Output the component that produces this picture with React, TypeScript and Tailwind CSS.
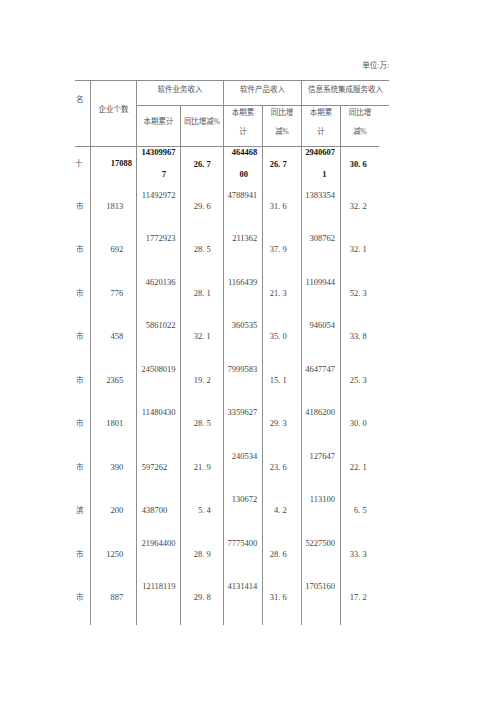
import React from 'react';

// scanned table page: software revenue by city
const line = 'border-[#8c8c8c]';

const rows: string[][] = [
  ['市', '1813', '11492972', '29.6', '4788941', '31.6', '1383354', '32.2'],
  ['市', '692', '1772923', '28.5', '211362', '37.9', '308762', '32.1'],
  ['市', '776', '4620136', '28.1', '1166439', '21.3', '1109944', '52.3'],
  ['市', '458', '5861022', '32.1', '360535', '35.0', '946054', '33.8'],
  ['市', '2365', '24508019', '19.2', '7999583', '15.1', '4647747', '25.3'],
  ['市', '1801', '11480430', '28.5', '3359627', '29.3', '4186200', '30.0'],
  ['市', '390', '<597262', '21.9', '240534', '23.6', '127647', '22.1'],
  ['滨', '200', '<438700', '5.4', '130672', '4.2', '113100', '6.5'],
  ['市', '1250', '21964400', '28.9', '7775400', '28.6', '5227500', '33.3'],
  ['市', '887', '12118119', '29.8', '4131414', '31.6', '1705160', '17.2'],
];

// '.' takes a full digit width, as in the scanned font
function Num({ v }: { v: string }) {
  return (
    <>
      {v.split('').map((ch, i) =>
        ch === '.' ? (
          <span key={i} className="inline-block w-[0.5em] text-left">.</span>
        ) : (
          <span key={i}>{ch}</span>
        )
      )}
    </>
  );
}

const colCls = [
  'whitespace-nowrap pl-[1px] pt-[11px]',
  `border-l ${line} text-right pr-[12.7px] pt-[11px]`,
  `border-l ${line} text-right pr-[4.5px]`,
  `border-l ${line} text-right pr-[12.3px] pt-[11px]`,
  `border-l ${line} text-right pr-[4.7px]`,
  `border-l ${line} text-right pr-[14.3px] pt-[11px]`,
  `border-l ${line} text-right pr-[5px]`,
  `border-l ${line} text-right pr-[12.3px] pt-[11px]`,
];

const App: React.FC = () => {
  return (
    <div className="w-[500px] h-[707px] bg-white pt-[60px] font-['Liberation_Serif','Noto_Sans_CJK_SC',serif] text-[#444]">
      <div className="ml-[75px] w-[314px] h-[11px] text-right text-[7.5px] leading-[11px] text-[#555]">
        单位:万:
      </div>

      <div className="mt-[9px] ml-[75px] grid grid-cols-[15px_46px_44px_43px_39px_39px_39px_39px_10px] grid-rows-[26px_40px_repeat(11,43.5px)] text-[8.5px] leading-[11px]">
        {/* header row 1 */}
        <div className={`row-span-2 border-t ${line} pl-[1px] pt-[12.8px] text-[7.5px] text-[#555]`}>名</div>
        <div className={`row-span-2 border-t border-l ${line} text-center pt-[22.8px] text-[7.5px] text-[#555]`}>企业个数</div>
        <div className={`col-span-2 border-t border-b border-l ${line} text-center pt-[2.5px] text-[7.5px] text-[#555]`}>软件业务收入</div>
        <div className={`col-span-2 border-t border-b border-l ${line} text-center pt-[2.5px] text-[7.5px] text-[#555]`}>软件产品收入</div>
        <div className={`col-span-3 border-t border-b border-l ${line} text-center pt-[2.5px] text-[7.5px] text-[#555]`}>信息系统集成服务收入</div>

        {/* header row 2 */}
        <div className={`border-l ${line} text-center pt-[9.5px] text-[7.5px] text-[#555]`}>本期累计</div>
        <div className={`border-l ${line} text-center pt-[9.5px] text-[7.5px] text-[#555]`}>同比增减%</div>
        {['本期累|计', '同比增|减%', '本期累|计', '同比增|减%'].map((h, i) => (
          <div key={i} className={`border-l ${line} text-center pt-[0.5px] text-[7.5px] text-[#555]`}>
            <div>{h.split('|')[0]}</div>
            <div className="mt-[8px]">{h.split('|')[1]}</div>
          </div>
        ))}
        <div />

        {/* total row */}
        <div className={`border-t ${line} whitespace-nowrap pt-[11px] text-[7.5px] text-[#555]`}>十</div>
        <div className={`border-t border-l ${line} text-right pr-[4px] pt-[11px] font-bold text-[#111]`}>17088</div>
        <div className={`border-t border-l ${line} text-right pr-[4.5px] font-bold text-[#111]`}>
          <div>14309967</div>
          <div className="mt-[10.8px] pr-[9.5px]">7</div>
        </div>
        <div className={`border-t border-l ${line} text-right pr-[12.3px] pt-[12px] font-bold text-[#111]`}>
          <Num v="26.7" />
        </div>
        <div className={`border-t border-l ${line} text-right pr-[4.7px] font-bold text-[#111]`}>
          <div>464468</div>
          <div className="mt-[10.8px] pr-[9.3px]">00</div>
        </div>
        <div className={`border-t border-l ${line} text-right pr-[14.3px] pt-[12px] font-bold text-[#111]`}>
          <Num v="26.7" />
        </div>
        <div className={`border-t border-l ${line} text-right pr-[5px] font-bold text-[#111]`}>
          <div>2940607</div>
          <div className="mt-[10.8px] pr-[8.5px]">1</div>
        </div>
        <div className={`border-t border-l ${line} text-right pr-[12.3px] pt-[12px] font-bold text-[#111]`}>
          <Num v="30.6" />
        </div>
        <div />

        {/* city rows */}
        {rows.map((r, ri) => (
          <React.Fragment key={ri}>
            {r.map((v, ci) => {
              if (ci === 0) {
                return (
                  <div key={ci} className={`${colCls[0]} text-[7.5px] text-[#555]`}>
                    {v}
                  </div>
                );
              }
              if (v.startsWith('<')) {
                return (
                  <div key={ci} className={`border-l ${line} text-left pl-[4.7px] pt-[11px]`}>
                    {v.slice(1)}
                  </div>
                );
              }
              return (
                <div key={ci} className={colCls[ci]}>
                  <Num v={v} />
                </div>
              );
            })}
            <div />
          </React.Fragment>
        ))}
      </div>
    </div>
  );
};

export default App;
